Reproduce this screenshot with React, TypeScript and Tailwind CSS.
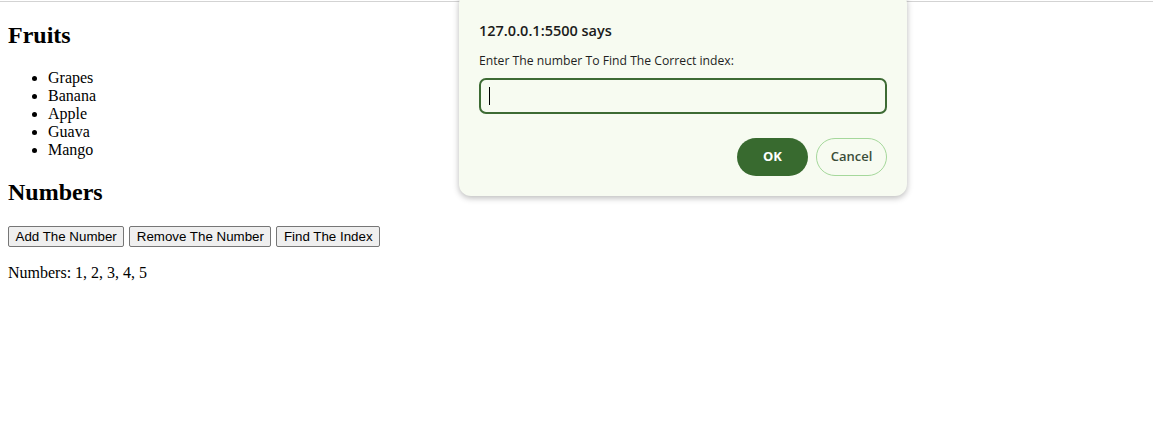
import React from "react";

export default function App() {
  const fruits = ["Grapes", "Banana", "Apple", "Guava", "Mango"];
  const serif = { fontFamily: '"Liberation Serif", "Times New Roman", serif' };
  return (
    <div className="relative w-[1153px] h-[424px] overflow-hidden bg-white text-black">
      <div className="h-px bg-white" />
      <div className="h-px bg-[#d3d3d3]" />
      <div className="px-2 font-['Liberation_Serif',serif] text-[16px]" style={serif}>
        <h2 className="mt-[20px] text-[24px] font-bold leading-[27px]">Fruits</h2>
        <ul className="mt-[20px] pl-[40px] list-disc leading-[18px]">
          {fruits.map((f) => (
            <li key={f}>{f}</li>
          ))}
        </ul>
        <h2 className="mt-[20px] text-[24px] font-bold leading-[27px]">Numbers</h2>
        <div className="mt-[20px] flex gap-[5px]">
          {["Add The Number", "Remove The Number", "Find The Index"].map((b) => (
            <button
              key={b}
              className="h-[21px] px-[6.5px] border border-[#767676] rounded-[2px] bg-[#efefef] text-[13.33px] leading-[16px] text-black font-['Liberation_Sans',Arial,sans-serif]"
            >
              {b}
            </button>
          ))}
        </div>
        <p className="mt-[17px] leading-[18px]">Numbers: 1, 2, 3, 4, 5</p>
      </div>

      {/* Prompt dialog */}
      <div className="absolute left-[459px] top-[-8px] w-[448px] h-[204px] rounded-[12px] bg-[#f7fbf1] shadow-[0_2px_6px_rgba(0,0,0,0.28)] px-[20px] pt-[28px] font-['Open_Sans',sans-serif] text-[#1f1f1f]">
        <div className="text-[14.5px] leading-[22px] font-semibold text-[#1b1b1b]">127.0.0.1:5500 says</div>
        <div className="mt-[11px] text-[12.2px] leading-[16px] text-[#1f1f1f]">
          Enter The number To Find The Correct index:
        </div>
        <div className="mt-[9px] h-[36px] rounded-[7px] border-2 border-[#3d6b34] bg-[#f7fbf1] flex items-center pl-[8px]">
          <div className="w-px h-[18px] bg-black" />
        </div>
        <div className="mt-[24px] flex justify-end gap-[8px]">
          <button className="w-[71px] h-[38px] rounded-full bg-[#386a2f] text-white text-[13px] font-bold">
            OK
          </button>
          <button className="w-[71px] h-[38px] rounded-full border border-[#a5d89b] bg-[#f7fbf1] text-[#3a4d38] text-[13px] font-semibold">
            Cancel
          </button>
        </div>
      </div>
    </div>
  );
}
